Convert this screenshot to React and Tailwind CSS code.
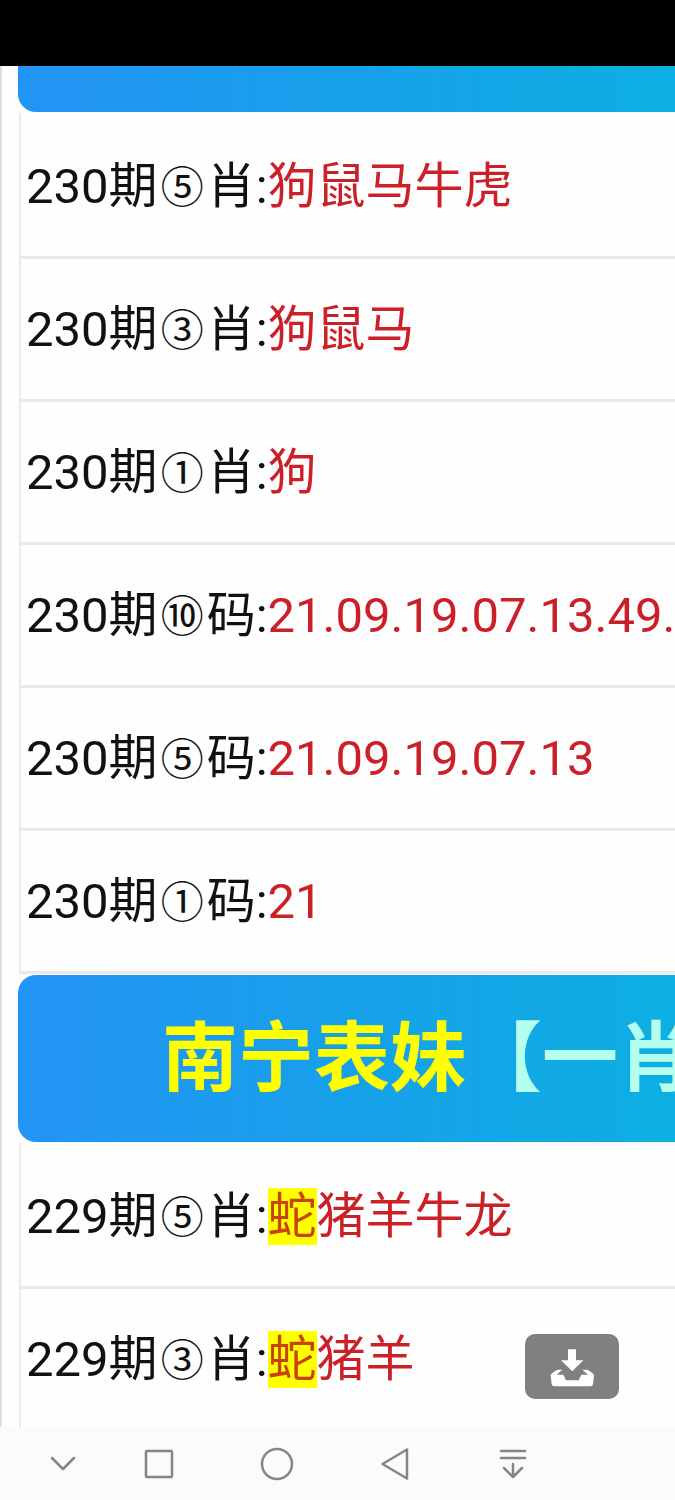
import clsx from "clsx";

const CURRENT = [
  { issue: "230期", count: "⑤", kind: "肖:", picks: "狗鼠马牛虎" },
  { issue: "230期", count: "③", kind: "肖:", picks: "狗鼠马" },
  { issue: "230期", count: "①", kind: "肖:", picks: "狗" },
  { issue: "230期", count: "⑩", kind: "码:", picks: "21.09.19.07.13.49." },
  { issue: "230期", count: "⑤", kind: "码:", picks: "21.09.19.07.13" },
  { issue: "230期", count: "①", kind: "码:", picks: "21" },
];

const PREVIOUS = [
  { issue: "229期", count: "⑤", kind: "肖:", hit: "蛇", picks: "猪羊牛龙" },
  { issue: "229期", count: "③", kind: "肖:", hit: "蛇", picks: "猪羊" },
];

const NAV_ITEMS = [
  { name: "收起", icon: <path d="M7 12l11 11l11-11" /> },
  { name: "最近任务", icon: <rect x="5" y="5" width="26" height="26" rx="1" /> },
  { name: "主页", icon: <circle cx="18" cy="18" r="15" /> },
  { name: "返回", icon: <path d="M30 3.5v29L5.500 18z" /> },
  { name: "通知", icon: <path d="M6 5h24M6 12h24M18 18v13M9 22l9 9l9-9" /> },
];

function Banner({ children }) {
  return (
    <div className="flex items-center overflow-hidden whitespace-nowrap bg-linear-to-r from-[#2394f5] via-[#17a0ea] to-[#0dafe2]">
      {children}
    </div>
  );
}

function PickList({ rows }) {
  return (
    <ul className="ml-px border-l-2 border-[#ece8ee] pt-[3px]">
      {rows.map((row) => (
        <li
          key={row.count + row.kind}
          className="overflow-hidden whitespace-nowrap border-b-[3px] border-[#ece8ee] pt-[42px] pb-[41px] pl-[5px] text-[49px] leading-[57px]"
        >
          {row.issue}
          <span className="inline-block w-[49px] text-center text-[43px] leading-none">{row.count}</span>
          {row.kind}
          <span className="text-[#cb2028]">
            {row.hit && <mark className="bg-[#ffff00] text-[#c8420c]">{row.hit}</mark>}
            {row.picks}
          </span>
        </li>
      ))}
    </ul>
  );
}

export default function App() {
  return (
    <div className="relative flex h-screen flex-col overflow-hidden bg-[#fefefe] font-[Roboto,'Noto_Sans_CJK_SC',sans-serif] text-[#111]">
      {/* Status bar */}
      <div className="h-[66px] shrink-0 bg-black" />

      <main className="flex min-h-0 flex-1 flex-col gap-px overflow-hidden border-l-2 border-[#e2dce2] pl-4">
        <div className="shrink-0 overflow-hidden rounded-bl-[18px]">
          <Banner>
            <div className="h-[46px]" />
          </Banner>
        </div>
        <PickList rows={CURRENT} />
        <div className="shrink-0 overflow-hidden rounded-l-[18px]">
          <Banner>
            <h2 className="pt-[29px] pb-[27px] pl-[144px] text-[76px] leading-[111px] font-bold text-[#ffff00]">
              南宁表妹<span className="text-[#b4ffee]">【一肖</span>
            </h2>
          </Banner>
        </div>
        <PickList rows={PREVIOUS} />
      </main>

      {/* Floating download button */}
      <button
        aria-label="下载"
        className="absolute right-14 bottom-[101px] flex h-[65px] w-[94px] items-center justify-center rounded-[10px] bg-[#808080] text-white"
      >
        <svg className="h-10 w-[46px]" viewBox="147 110 138 120" fill="currentColor">
          <path d="M204 117h24v33h22l-33 33l-34-33h21z" />
          <path d="M172 178h15l-17 15h20l8 17h38l8-17h20l-17-15h15q20 11 20 17l-3 26q-1 7-8 7H163q-7 0-8-7l-3-26q0-6 20-17z" />
        </svg>
      </button>

      <nav className="flex h-[73px] shrink-0 items-center bg-[#fbfbfb] pl-[26px] text-[#858585]">
        {NAV_ITEMS.map((item, i) => (
          <button
            key={item.name}
            aria-label={item.name}
            className={clsx("flex h-full items-center justify-center", i === 0 ? "w-[74px]" : "w-[118px]")}
          >
            <svg
              className="size-9"
              viewBox="0 0 36 36"
              fill="none"
              stroke="currentColor"
              strokeWidth="2.5"
              strokeLinecap="round"
              strokeLinejoin="round"
            >
              {item.icon}
            </svg>
          </button>
        ))}
      </nav>
    </div>
  );
}
